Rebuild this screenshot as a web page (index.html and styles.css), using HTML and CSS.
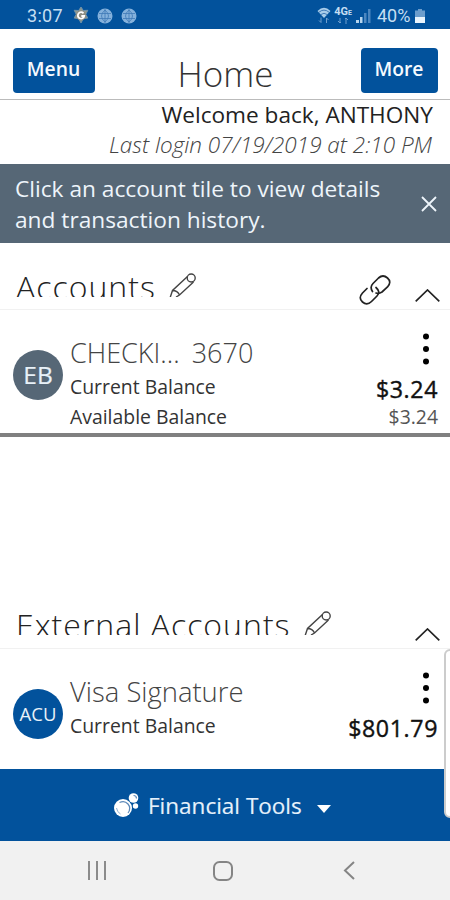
FILE: index.html
```html
<!DOCTYPE html>
<html lang="en">
<head>
    <meta charset="UTF-8">
    <meta name="viewport" content="width=device-width, initial-scale=1.0">
    <title>Home</title>
    <link rel="stylesheet" href="styles.css">
</head>
<body>
    <div class="status-bar">
        <span class="time">3:07</span>
        <svg class="status-gear" width="18" height="18" viewBox="0 0 18 18">
            <path d="M9 0l2.3 3.5 4.5-.2-2 4 2 3.8-4.5.5L9 16l-2.3-4.4-4.5-.5 2-3.8-2-4 4.5.2z" fill="#8f9a91" stroke="#6f91a8"/>
            <circle cx="9" cy="8.5" r="5" fill="#8d8c80"/>
            <path d="M11.5 6.3a3.2 3.2 0 1 0 .7 2.7H9.3" fill="none" stroke="#fff" stroke-width="1.8"/>
        </svg>
        <svg class="status-globe" width="16" height="16" viewBox="0 0 16 16">
            <circle cx="8" cy="8" r="7.5" fill="#84b1dc"/>
            <path d="M2 5.5h12M2 10.5h12M8 1v14M8 2q-7 6 0 12q7-6 0-12" fill="none" stroke="#3f7ab6" stroke-width=".8"/>
        </svg>
        <svg class="status-globe" width="16" height="16" viewBox="0 0 16 16">
            <circle cx="8" cy="8" r="7.5" fill="#84b1dc"/>
            <path d="M2 5.5h12M2 10.5h12M8 1v14M8 2q-7 6 0 12q7-6 0-12" fill="none" stroke="#3f7ab6" stroke-width=".8"/>
        </svg>
        <svg class="wifi" width="14" height="17" viewBox="0 0 14 17">
            <path d="M.5 4Q7-2.5 13.5 4L7 11z" fill="#a9cdea"/>
            <path d="M2 5.2Q7 1 12 5.2M4 7.5Q7 5 10 7.5" fill="none" stroke="#2766aa" stroke-width=".8"/>
            <path d="M4 10.5v5m-2-2l2 2M9.5 16v-5m0 0l2 2" fill="none" stroke="#6f9fce"/>
        </svg>
        <span class="network">
            <span class="network-name">4G<small>E</small></span>
            <svg width="12" height="6" viewBox="0 0 12 6">
                <path d="M3 0v5m-2-2l2 2 1-1M9 6V0m-1 1l1-1 2 2" fill="none" stroke="#6f9fce"/>
            </svg>
        </span>
        <svg class="signal" width="15" height="14" viewBox="0 0 15 14">
            <path d="M0 11h3v3H0zM4 8h2.5v6H4z" fill="#b5d4ed"/>
            <path d="M8 4h2.5v10H8zM12 0h2.5v14H12z" fill="#4b86c0"/>
        </svg>
        <span class="percent">40%</span>
        <svg class="battery" width="10" height="14" viewBox="0 0 10 14">
            <path d="M3 0h4v1.5h3V8H0V1.5h3z" fill="#6c9dcc"/>
            <path d="M0 8h10v6H0z" fill="#e9f4fc"/>
        </svg>
    </div>

    <div class="header">
        <button class="header-btn menu-btn">Menu</button>
        <h1>Home</h1>
        <button class="header-btn more-btn">More</button>
    </div>

    <div class="welcome">
        <div class="welcome-name">Welcome back, ANTHONY</div>
        <div class="last-login">Last login 07/19/2019 at 2:10 PM</div>
    </div>

    <div class="notice">
        <p>Click an account tile to view details<br>and transaction history.</p>
        <svg width="16" height="16" viewBox="0 0 16 16">
            <path d="M1 1l14 14M15 1L1 15" stroke="#eef5fb" stroke-width="1.8"/>
        </svg>
    </div>

    <div class="section-head">
        <h2>Accounts</h2>
        <svg class="pencil" width="27" height="24" viewBox="0 0 27 24">
            <g fill="none" stroke="#444" stroke-width="1.4">
                <path d="M1 25L3.5 17.5 18.5 3.5M24.5 9L10.5 22 7 24M3.5 17.5q5 0 7 4.5"/>
                <circle cx="22.2" cy="5" r="4"/>
            </g>
        </svg>
        <svg class="link" width="32" height="30" viewBox="0 0 32 30">
            <g fill="none" stroke="#222" stroke-width="1.7" stroke-linecap="round">
                <path d="M13.5 16.5Q10.5 12 14 8.5L19.5 3Q24-1 28.5 3T28.5 12L23 17Q20 19 17 18"/>
                <path d="M17 12.5Q22 17 18 21L12.5 26.5Q8 31 3.5 27T3.5 18L8 13.5"/>
            </g>
        </svg>
        <svg class="chevron" width="25" height="13" viewBox="0 0 25 13">
            <path d="M.7 12.3L12.5 1l11.8 11.3" fill="none" stroke="#222" stroke-width="1.7"/>
        </svg>
    </div>

    <div class="account checking">
        <div class="avatar">EB</div>
        <div class="info">
            <div class="name">CHECKI... <span class="number">3670</span></div>
            <div class="label">Current Balance</div>
            <div class="label">Available Balance</div>
        </div>
        <div class="amounts">
            <svg class="dots" width="6" height="32" viewBox="0 0 6 32">
                <circle cx="3" cy="3.5" r="3"/><circle cx="3" cy="16" r="3"/><circle cx="3" cy="28.5" r="3"/>
            </svg>
            <div class="current">$3.24</div>
            <div class="available-amount">$3.24</div>
        </div>
    </div>

    <div class="section-head external-head">
        <h2>External Accounts</h2>
        <svg class="pencil" width="27" height="24" viewBox="0 0 27 24">
            <g fill="none" stroke="#444" stroke-width="1.4">
                <path d="M1 25L3.5 17.5 18.5 3.5M24.5 9L10.5 22 7 24M3.5 17.5q5 0 7 4.5"/>
                <circle cx="22.2" cy="5" r="4"/>
            </g>
        </svg>
        <svg class="chevron" width="25" height="13" viewBox="0 0 25 13">
            <path d="M.7 12.3L12.5 1l11.8 11.3" fill="none" stroke="#222" stroke-width="1.7"/>
        </svg>
    </div>

    <div class="account visa">
        <div class="avatar avatar-blue">ACU</div>
        <div class="info">
            <div class="name visa-name">Visa Signature</div>
            <div class="label">Current Balance</div>
        </div>
        <div class="amounts">
            <svg class="dots" width="6" height="32" viewBox="0 0 6 32">
                <circle cx="3" cy="3.5" r="3"/><circle cx="3" cy="16" r="3"/><circle cx="3" cy="28.5" r="3"/>
            </svg>
            <div class="current">$801.79</div>
        </div>
        <div class="edge-panel"></div>
    </div>

    <div class="tools">
        <svg class="tools-icon" width="25" height="25" viewBox="0 0 25 25">
            <circle cx="9" cy="15" r="9" fill="#fff"/>
            <circle cx="19.5" cy="5" r="4.8" fill="#fff"/>
            <circle cx="21.5" cy="13" r="2.7" fill="#fff"/>
            <path d="M5.5 9.5q5-2.5 8.5 1.5t0 9M19.5 2.5q3 0 3 3" fill="none" stroke="#5b88b8" stroke-width="1.2"/>
            <path d="M2.5 15q.5 4 4 6" fill="none" stroke="#8fb0d2"/>
        </svg>
        <span>Financial Tools</span>
        <svg class="caret" width="14" height="8" viewBox="0 0 14 8"><path d="M0 0h14L7 8z" fill="#fff"/></svg>
    </div>

    <div class="nav-bar">
        <svg width="20" height="19" viewBox="0 0 20 19"><path d="M2 0v19M10 0v19M18 0v19" stroke="#8b8b8b" stroke-width="2"/></svg>
        <svg class="nav-home" width="20" height="20" viewBox="0 0 20 20"><rect x="1" y="1" width="18" height="18" rx="5.5" fill="none" stroke="#858585" stroke-width="2"/></svg>
        <svg class="nav-back" width="12" height="19" viewBox="0 0 12 19"><path d="M11 1L2 9.5l9 8.5" fill="none" stroke="#858585" stroke-width="2"/></svg>
    </div>
</body>
</html>
```

FILE: styles.css
```css
* {
    box-sizing: border-box;
}
body {
    margin: 0;
    width: 450px;
    height: 900px;
    overflow: hidden;
    display: flex;
    flex-direction: column;
    font-family: "Open Sans", sans-serif;
    background-color: #fff;
    color: #222;
    white-space: nowrap;
}
svg {
    display: block;
    flex-shrink: 0;
}
h1, h2, p {
    margin: 0;
}
.status-bar {
    height: 29px;
    flex-shrink: 0;
    display: flex;
    align-items: center;
    padding: 2px 25px 0 27px;
    background-color: #02529c;
    color: #c5def2;
    font-family: Roboto, sans-serif;
    font-size: 18px;
}
.time {
    width: 45px;
    letter-spacing: 0.3px;
}
.status-globe {
    margin-left: 7px;
}
.status-globe + .status-globe {
    margin-left: 8px;
}
.wifi {
    margin-left: auto;
}
.network {
    width: 20px;
    margin-left: 2px;
    display: flex;
    flex-direction: column;
    align-items: center;
}
.network-name {
    font-size: 11px;
    line-height: 10px;
    font-weight: bold;
}
.network-name small {
    font-size: 7px;
}
.signal {
    margin-left: 3px;
}
.percent {
    margin-left: 6px;
    width: 38px;
}
.header {
    height: 71px;
    flex-shrink: 0;
    display: flex;
    justify-content: space-between;
    align-items: flex-start;
    padding: 19px 12px 0 13px;
    border-bottom: 1px solid #bbb;
}
.header-btn {
    height: 45px;
    padding: 0 1px 4px 0;
    border: none;
    border-radius: 4px;
    background-color: #02529c;
    color: #f5faff;
    font-family: "Open Sans", sans-serif;
    font-size: 19.3px;
    font-weight: 600;
}
.menu-btn {
    width: 82px;
}
.more-btn {
    width: 77px;
}
h1 {
    margin-right: 5px;
    font-size: 35px;
    font-weight: 300;
    line-height: 51px;
    color: #333;
}
.welcome {
    height: 64px;
    flex-shrink: 0;
    padding-right: 17px;
    text-align: right;
}
.welcome-name {
    font-size: 22.6px;
    line-height: 30px;
}
.last-login {
    padding-right: 1px;
    font-size: 22.5px;
    font-style: italic;
    font-weight: 300;
    line-height: 30px;
    color: #444;
}
.notice {
    height: 79px;
    flex-shrink: 0;
    display: flex;
    align-items: center;
    justify-content: space-between;
    padding: 1px 13px 0 15px;
    background-color: #566776;
    color: #eef5fb;
    font-size: 22.7px;
    line-height: 31px;
}
.section-head {
    height: 67px;
    flex-shrink: 0;
    display: flex;
    align-items: flex-start;
    padding: 28px 10px 0 16px;
    border-bottom: 1px solid #f1f1f1;
}
/* the title box is shorter than the text, so the letters are cut off */
h2 {
    height: 26px;
    overflow: hidden;
    font-size: 32px;
    font-weight: 300;
    line-height: 32px;
    letter-spacing: 1px;
}
.pencil {
    margin: 2px 0 0 13px;
}
.link {
    margin: 4px 24px 0 auto;
}
.chevron {
    margin-top: 18px;
}
.account {
    height: 127px;
    flex-shrink: 0;
    display: flex;
    padding: 0 12px 0 13px;
    position: relative;
}
.checking {
    border-bottom: 4px solid #808080;
}
.avatar {
    width: 50px;
    height: 50px;
    margin-top: 40px;
    border-radius: 50%;
    background-color: #566776;
    color: #e8f1f8;
    font-size: 24.5px;
    line-height: 49px;
    text-align: center;
    -webkit-text-stroke: 0.2px #e8f1f8;
}
.avatar-blue {
    background-color: #02529c;
    font-size: 18.5px;
    -webkit-text-stroke: 0;
}
.info {
    padding: 26px 0 0 7px;
}
.name {
    margin-bottom: 2px;
    font-size: 27px;
    font-weight: 300;
    line-height: 34px;
    color: #444;
}
.number {
    margin-left: 5px;
}
.visa-name {
    font-size: 27.4px;
}
.label {
    font-size: 19.4px;
    line-height: 30px;
    color: #333;
}
.amounts {
    margin-left: auto;
    display: flex;
    flex-direction: column;
    align-items: flex-end;
}
.dots {
    margin: 23px 9px 9px 0;
}
.current {
    font-size: 23.2px;
    line-height: 31px;
    letter-spacing: 0.6px;
    color: #111;
    -webkit-text-stroke: 0.4px #111;
}
.available-amount {
    font-size: 19.4px;
    line-height: 24px;
    color: #555;
}
.external-head {
    margin-top: 145px;
    padding-top: 27px;
}
.external-head .chevron {
    margin: 19px 0 0 auto;
}
.visa {
    height: 120px;
}
.edge-panel {
    position: absolute;
    top: 0;
    right: -6px;
    width: 12px;
    height: 169px;
    border: 2px solid #ccc;
    border-radius: 7px;
    background-color: #fff;
}
.tools {
    height: 72px;
    flex-shrink: 0;
    display: flex;
    align-items: center;
    padding-left: 114px;
    background-color: #02529c;
    color: #e6f1fb;
    font-size: 22.5px;
    -webkit-text-stroke: 0.15px #e6f1fb;
}
.tools-icon {
    margin-right: 9px;
}
.caret {
    margin: 8px 0 0 15px;
}
.nav-bar {
    flex: 1;
    display: flex;
    align-items: center;
    padding-left: 87px;
    background-color: #f1f1f1;
}
.nav-home {
    margin-left: 106px;
}
.nav-back {
    margin-left: 110px;
}
```
